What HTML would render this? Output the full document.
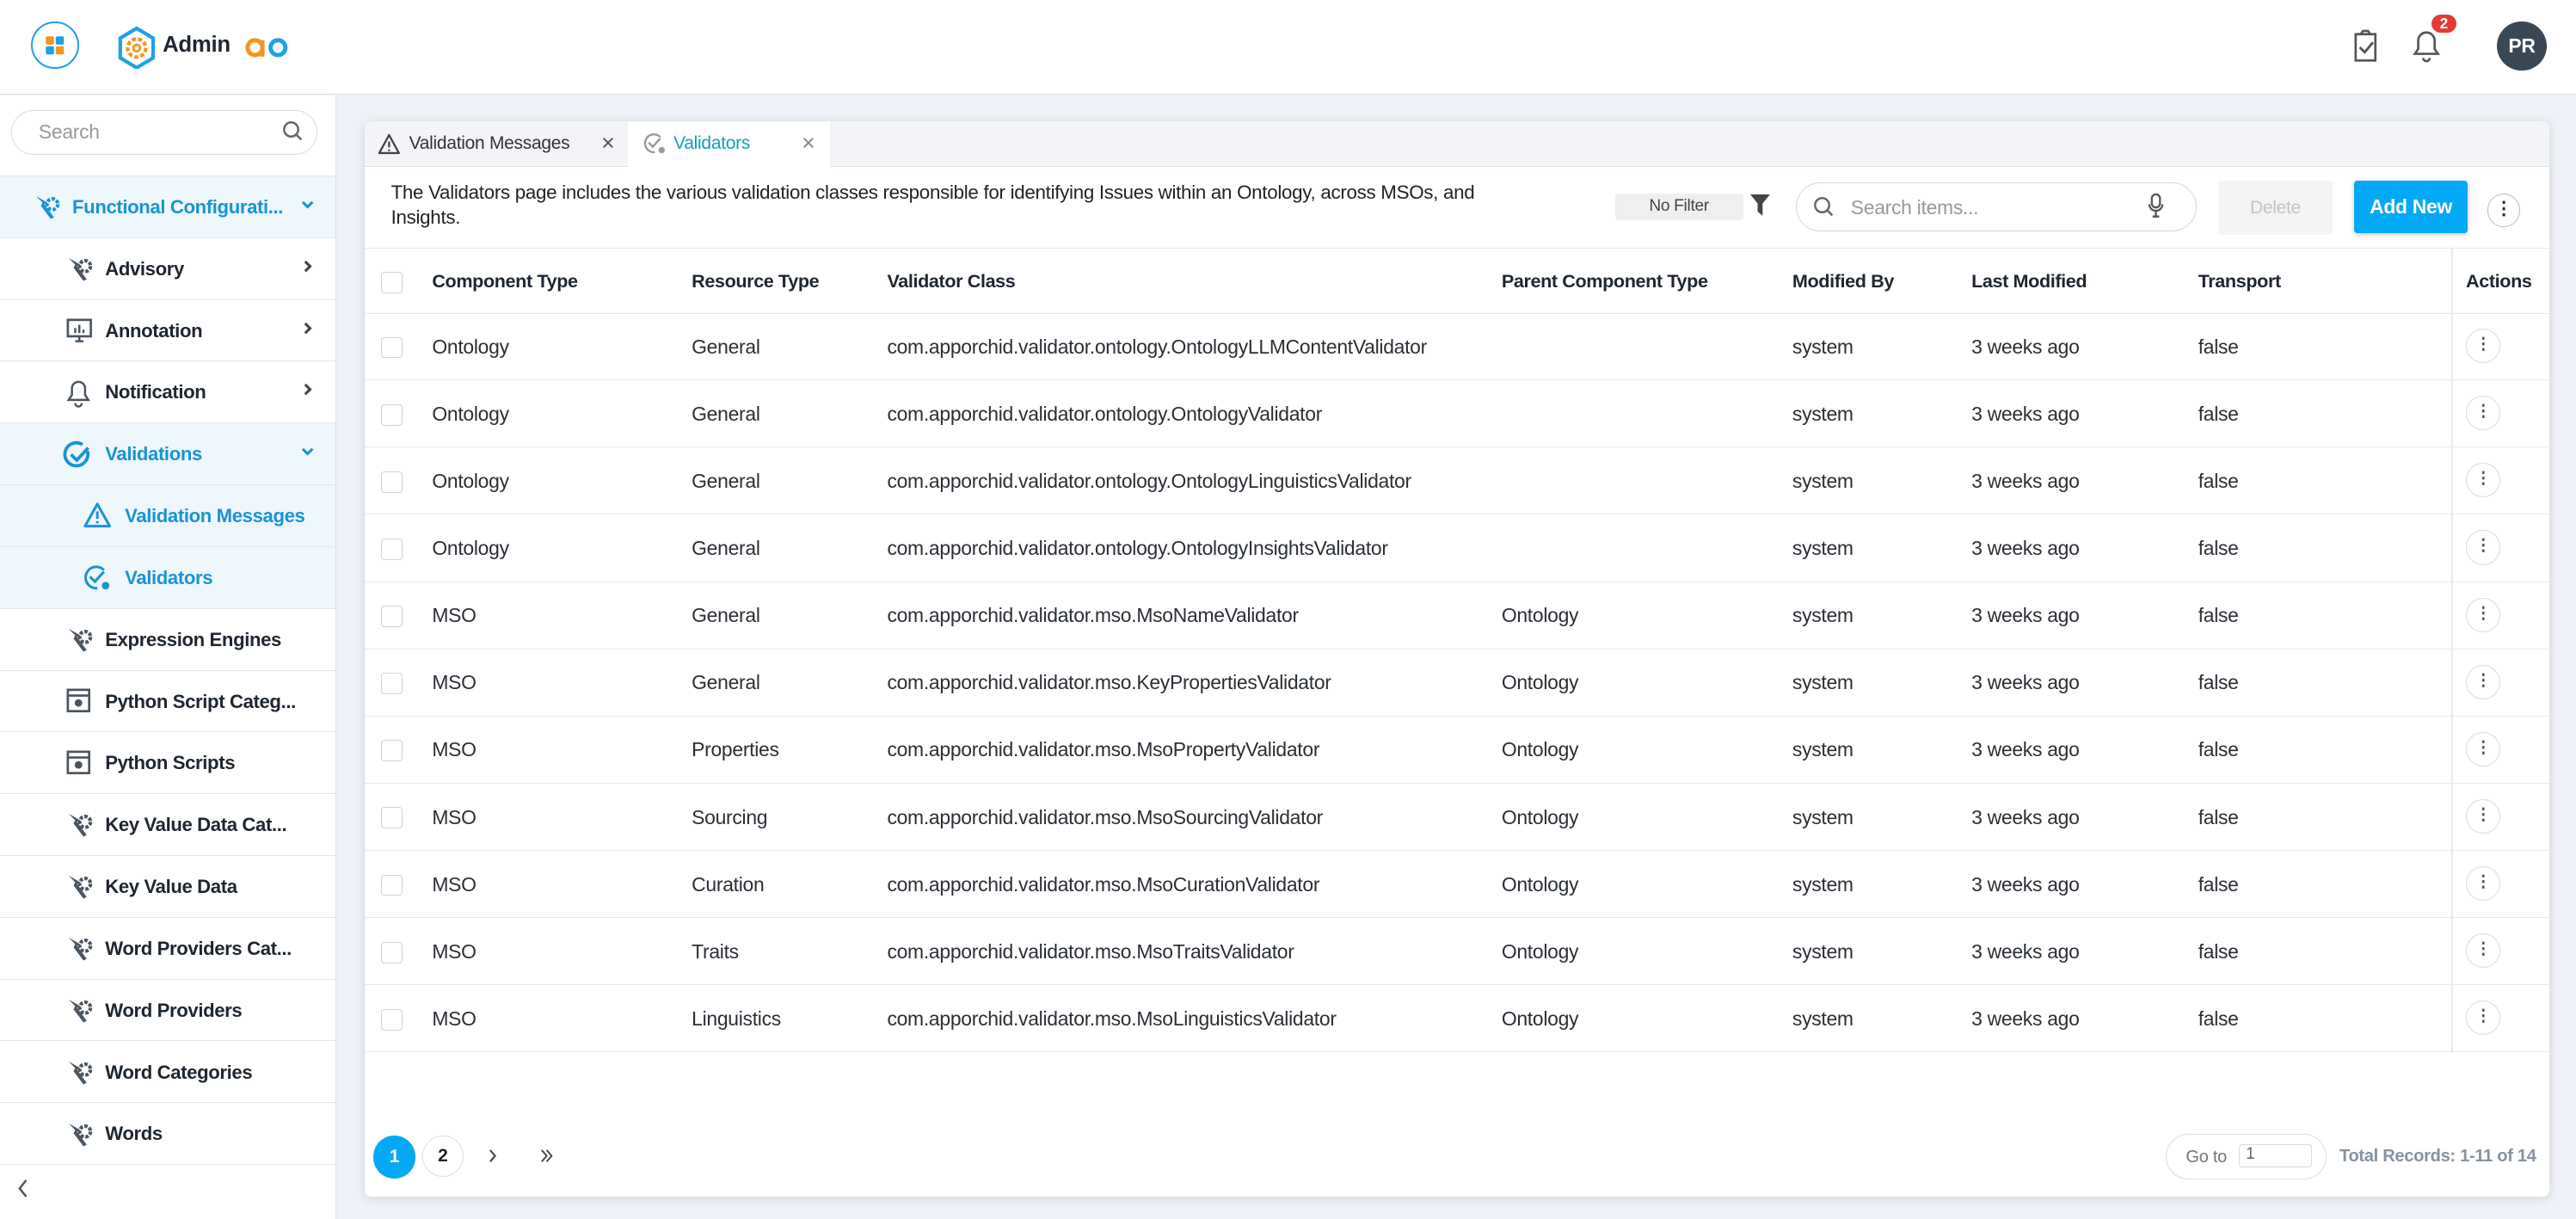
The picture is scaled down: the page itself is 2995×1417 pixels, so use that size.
<!DOCTYPE html>
<html><head><meta charset="utf-8"><style>
html,body{margin:0;padding:0;}
body{width:2995px;height:1417px;overflow:hidden;background:#eef1f7;}
#w{zoom:1.9101;width:1568px;height:742px;position:relative;font-family:"Liberation Sans",sans-serif;color:#222;font-size:12px;letter-spacing:-0.15px;}
.abs{position:absolute;}
#hdr{left:0;top:0;width:1568px;height:57px;background:#fff;border-bottom:1px solid #dde1e6;}
#side{left:0;top:58px;width:204px;height:684px;background:#fff;border-right:1px solid #dde1e6;}
.mi{position:absolute;left:0;width:204px;height:37px;border-bottom:1px solid #e3e6ea;font-size:11.6px;font-weight:bold;color:#1e2630;letter-spacing:-0.2px;}
.mi .t{position:absolute;top:12px;white-space:nowrap;}
.mi .ch{position:absolute;right:13px;top:13px;}
.mi.s{background:#eef7fc;color:#1a93d4;}
.ico{position:absolute;top:10px;}
#card{left:222px;top:74px;width:1330px;height:654px;background:#fff;border-radius:4px;box-shadow:0 1px 6px rgba(0,0,0,.12);overflow:hidden;}
.row{position:absolute;left:0;width:1330px;height:40px;border-bottom:1px solid #e6e8eb;}
.c{position:absolute;top:13px;font-size:12px;color:#2a2f36;white-space:nowrap;}
.h .c{font-weight:bold;color:#1e2630;top:13px;font-size:11.3px;letter-spacing:-0.2px;}
.cb{position:absolute;left:10px;top:14px;width:12px;height:12px;border:1px solid #cfd3d8;border-radius:2px;}
.ab{position:absolute;left:1279px;top:9px;width:20px;height:20px;border:1px solid #d8dbe0;border-radius:50%;text-align:center;line-height:19px;font-size:10px;font-weight:bold;color:#555;}
</style></head><body><div id="w">
<div id="hdr" class="abs">
 <div class="abs" style="left:19px;top:13px;width:29px;height:29px;border:1.3px solid #1ea1e6;border-radius:50%;box-sizing:border-box;">
  <svg width="27" height="27" viewBox="0 0 27 27" style="position:absolute;left:0;top:0"><rect x="8" y="8" width="5" height="5" rx="1" fill="#f7941d"/><rect x="14" y="8" width="5" height="5" rx="1" fill="#1ea1e6"/><rect x="8" y="14" width="5" height="5" rx="1" fill="#1ea1e6"/><rect x="14" y="14" width="5" height="5" rx="1" fill="#f7941d"/></svg></div>
 <svg class="abs" style="left:71px;top:16px" width="24" height="26" viewBox="0 0 24 26"><path d="M12 1 L22 7 L22 19 L12 25 L2 19 L2 7Z" fill="none" stroke="#1ea1e6" stroke-width="2.2"/><circle cx="12" cy="13" r="5.5" fill="none" stroke="#f7941d" stroke-width="2.2" stroke-dasharray="2.5 1.3"/><circle cx="12" cy="13" r="2" fill="none" stroke="#f7941d" stroke-width="1.5"/></svg>
 <div class="abs" style="left:99px;top:20px;font-size:13.5px;font-weight:bold;color:#1e2630;">Admin</div>
 <svg class="abs" style="left:149px;top:22px" width="28" height="14" viewBox="0 0 28 14"><circle cx="6" cy="7" r="4.5" fill="none" stroke="#f7941d" stroke-width="2.6"/><path d="M10.5 2.5v10" stroke="#f7941d" stroke-width="2.6"/><circle cx="20" cy="7" r="4.5" fill="none" stroke="#1ea1e6" stroke-width="2.6"/></svg>
 <svg class="abs" style="left:1432px;top:18px" width="16" height="20" viewBox="0 0 16 20"><path d="M5 3H2v16h12V3h-3M5 3l1.5-2h3L11 3z" fill="none" stroke="#555" stroke-width="1.4"/><path d="M4.5 11l3 3 5-6" fill="none" stroke="#555" stroke-width="1.5"/></svg>
 <svg class="abs" style="left:1467px;top:17px" width="20" height="22" viewBox="0 0 20 22"><path d="M3 16h14l-2-3V8a5 5 0 0 0-10 0v5z M8 18.5a2 2 0 0 0 4 0" fill="none" stroke="#555" stroke-width="1.4"/></svg>
 <div class="abs" style="left:1480px;top:9px;width:15px;height:11px;border-radius:6px;background:#e53935;color:#fff;font-size:9px;font-weight:bold;text-align:center;line-height:11px;">2</div>
 <div class="abs" style="left:1520px;top:13px;width:30px;height:30px;border-radius:50%;background:#3a4755;color:#fff;font-weight:bold;font-size:12px;text-align:center;line-height:30px;">PR</div>
</div>
<div id="side" class="abs">
 <div class="abs" style="left:7px;top:9px;width:186px;height:27px;border:1px solid #d8dbe0;border-radius:14px;box-sizing:border-box;"><span class="abs" style="left:16px;top:6px;color:#999;font-size:12px;">Search</span>
 <svg class="abs" style="left:164px;top:6px" width="13" height="13" viewBox="0 0 13 13"><circle cx="5.5" cy="5.5" r="4.3" fill="none" stroke="#666" stroke-width="1.3"/><path d="M8.7 8.7l3 3" stroke="#666" stroke-width="1.3"/></svg></div>
</div>
<div class="abs" style="left:0;top:58px;width:204px;">
 <div class="mi s" style="top:49px;height:37px;border-top:1px solid #e3e6ea"><span class="ico" style="left:20px">
 <svg width="18" height="18" viewBox="0 0 18 18"><path d="M2 2l4 4-1 2 6 8 2-1-6-8 2-1" fill="#1a93d4"/><circle cx="12" cy="7" r="3.3" fill="none" stroke="#1a93d4" stroke-width="2.2" stroke-dasharray="2 1"/></svg></span><span class="t" style="left:44px">Functional Configurati...</span><svg class="ch" width="8" height="8" viewBox="0 0 8 8"><path d="M1 2.5l3 3 3-3" fill="none" stroke="#1a93d4" stroke-width="1.6"/></svg></div>
</div>
<div class="abs" style="left:0;top:145px;width:204px;">
 <div class="mi" style="top:0"><span class="ico" style="left:40px"><svg width="18" height="18" viewBox="0 0 18 18"><path d="M2 2l4 4-1 2 6 8 2-1-6-8 2-1" fill="#4a5560"/><circle cx="12" cy="7" r="3.3" fill="none" stroke="#4a5560" stroke-width="2.2" stroke-dasharray="2 1"/></svg></span><span class="t" style="left:64px">Advisory</span><svg class="ch" width="8" height="8" viewBox="0 0 8 8"><path d="M2.5 1l3 3-3 3" fill="none" stroke="#444" stroke-width="1.6"/></svg></div>
 <div class="mi" style="top:37.6px"><span class="ico" style="left:40px"><svg width="17" height="17" viewBox="0 0 17 17"><rect x="1.5" y="2" width="14" height="10" fill="none" stroke="#4a5560" stroke-width="1.4"/><path d="M6 15h5M8.5 12v3M6 10V7M8.5 10V5M11 10V8" stroke="#4a5560" stroke-width="1.3"/></svg></span><span class="t" style="left:64px">Annotation</span><svg class="ch" width="8" height="8" viewBox="0 0 8 8"><path d="M2.5 1l3 3-3 3" fill="none" stroke="#444" stroke-width="1.6"/></svg></div>
 <div class="mi" style="top:75.2px"><span class="ico" style="left:40px"><svg width="16" height="18" viewBox="0 0 16 18"><path d="M2 13h12l-2-3V6a4 4 0 0 0-8 0v4z M6 15a2 2 0 0 0 4 0" fill="none" stroke="#4a5560" stroke-width="1.3"/></svg></span><span class="t" style="left:64px">Notification</span><svg class="ch" width="8" height="8" viewBox="0 0 8 8"><path d="M2.5 1l3 3-3 3" fill="none" stroke="#444" stroke-width="1.6"/></svg></div>
 <div class="mi s" style="top:112.8px"><span class="ico" style="left:38px"><svg width="18" height="18" viewBox="0 0 18 18"><path d="M15 6.5A7 7 0 1 1 12 2.5" fill="none" stroke="#1a93d4" stroke-width="2"/><path d="M5 8.5l3.5 3.5 7-7.5" fill="none" stroke="#1a93d4" stroke-width="2"/></svg></span><span class="t" style="left:64px">Validations</span><svg class="ch" width="8" height="8" viewBox="0 0 8 8"><path d="M1 2.5l3 3 3-3" fill="none" stroke="#1a93d4" stroke-width="1.6"/></svg></div>
 <div class="mi s" style="top:150.4px"><span class="ico" style="left:50px"><svg width="18" height="17" viewBox="0 0 18 17"><path d="M9 1.5L16.5 15H1.5Z" fill="none" stroke="#1a93d4" stroke-width="1.6" stroke-linejoin="round"/><path d="M9 6v4.5M9 12v1.2" stroke="#1a93d4" stroke-width="1.6"/></svg></span><span class="t" style="left:76px">Validation Messages</span></div>
 <div class="mi s" style="top:188px"><span class="ico" style="left:50px"><svg width="18" height="18" viewBox="0 0 18 18"><path d="M13 4A6.5 6.5 0 1 0 9 15" fill="none" stroke="#1a93d4" stroke-width="1.6"/><path d="M4.5 8l3 3 5.5-6" fill="none" stroke="#1a93d4" stroke-width="1.6"/><circle cx="14" cy="13.5" r="2.3" fill="#1a93d4"/></svg></span><span class="t" style="left:76px">Validators</span></div>
 <div class="mi" style="top:225.6px"><span class="ico" style="left:40px"><svg width="18" height="18" viewBox="0 0 18 18"><path d="M2 2l4 4-1 2 6 8 2-1-6-8 2-1" fill="#4a5560"/><circle cx="12" cy="7" r="3.3" fill="none" stroke="#4a5560" stroke-width="2.2" stroke-dasharray="2 1"/></svg></span><span class="t" style="left:64px">Expression Engines</span></div>
 <div class="mi" style="top:263.2px"><span class="ico" style="left:40px"><svg width="16" height="16" viewBox="0 0 16 16"><rect x="1.5" y="1.5" width="13" height="13" fill="none" stroke="#4a5560" stroke-width="1.4"/><path d="M1.5 5h13" stroke="#4a5560" stroke-width="1.4"/><circle cx="8" cy="9.5" r="2.3" fill="#4a5560"/></svg></span><span class="t" style="left:64px">Python Script Categ...</span></div>
 <div class="mi" style="top:300.8px"><span class="ico" style="left:40px"><svg width="16" height="16" viewBox="0 0 16 16"><rect x="1.5" y="1.5" width="13" height="13" fill="none" stroke="#4a5560" stroke-width="1.4"/><path d="M1.5 5h13" stroke="#4a5560" stroke-width="1.4"/><circle cx="8" cy="9.5" r="2.3" fill="#4a5560"/></svg></span><span class="t" style="left:64px">Python Scripts</span></div>
 <div class="mi" style="top:338.4px"><span class="ico" style="left:40px"><svg width="18" height="18" viewBox="0 0 18 18"><path d="M2 2l4 4-1 2 6 8 2-1-6-8 2-1" fill="#4a5560"/><circle cx="12" cy="7" r="3.3" fill="none" stroke="#4a5560" stroke-width="2.2" stroke-dasharray="2 1"/></svg></span><span class="t" style="left:64px">Key Value Data Cat...</span></div>
 <div class="mi" style="top:376px"><span class="ico" style="left:40px"><svg width="18" height="18" viewBox="0 0 18 18"><path d="M2 2l4 4-1 2 6 8 2-1-6-8 2-1" fill="#4a5560"/><circle cx="12" cy="7" r="3.3" fill="none" stroke="#4a5560" stroke-width="2.2" stroke-dasharray="2 1"/></svg></span><span class="t" style="left:64px">Key Value Data</span></div>
 <div class="mi" style="top:413.6px"><span class="ico" style="left:40px"><svg width="18" height="18" viewBox="0 0 18 18"><path d="M2 2l4 4-1 2 6 8 2-1-6-8 2-1" fill="#4a5560"/><circle cx="12" cy="7" r="3.3" fill="none" stroke="#4a5560" stroke-width="2.2" stroke-dasharray="2 1"/></svg></span><span class="t" style="left:64px">Word Providers Cat...</span></div>
 <div class="mi" style="top:451.2px"><span class="ico" style="left:40px"><svg width="18" height="18" viewBox="0 0 18 18"><path d="M2 2l4 4-1 2 6 8 2-1-6-8 2-1" fill="#4a5560"/><circle cx="12" cy="7" r="3.3" fill="none" stroke="#4a5560" stroke-width="2.2" stroke-dasharray="2 1"/></svg></span><span class="t" style="left:64px">Word Providers</span></div>
 <div class="mi" style="top:488.8px"><span class="ico" style="left:40px"><svg width="18" height="18" viewBox="0 0 18 18"><path d="M2 2l4 4-1 2 6 8 2-1-6-8 2-1" fill="#4a5560"/><circle cx="12" cy="7" r="3.3" fill="none" stroke="#4a5560" stroke-width="2.2" stroke-dasharray="2 1"/></svg></span><span class="t" style="left:64px">Word Categories</span></div>
 <div class="mi" style="top:526.4px"><span class="ico" style="left:40px"><svg width="18" height="18" viewBox="0 0 18 18"><path d="M2 2l4 4-1 2 6 8 2-1-6-8 2-1" fill="#4a5560"/><circle cx="12" cy="7" r="3.3" fill="none" stroke="#4a5560" stroke-width="2.2" stroke-dasharray="2 1"/></svg></span><span class="t" style="left:64px">Words</span></div>
 <svg class="abs" style="left:10px;top:572px" width="8" height="12" viewBox="0 0 8 12"><path d="M6 1L2 6l4 5" fill="none" stroke="#555" stroke-width="1.3"/></svg>
</div>

<div id="card" class="abs">
 <div class="abs" style="left:0;top:0;width:1330px;height:27px;background:#f2f4f7;border-bottom:1px solid #dde1e6;"></div>
 <div class="abs" style="left:0;top:0;width:160px;height:27px;">
  <svg class="abs" style="left:8px;top:7px" width="14" height="13" viewBox="0 0 14 13"><path d="M7 1L13 12H1Z" fill="none" stroke="#444" stroke-width="1.2" stroke-linejoin="round"/><path d="M7 5v3.5M7 9.8v1" stroke="#444" stroke-width="1.2"/></svg>
  <span class="abs" style="left:27px;top:7px;font-size:11px;color:#333;">Validation Messages</span>
  <span class="abs" style="left:144px;top:5px;font-size:14px;color:#555;">&#215;</span></div>
 <div class="abs" style="left:160px;top:0;width:123px;height:28px;background:#fff;">
  <svg class="abs" style="left:9px;top:6px" width="15" height="15" viewBox="0 0 18 18"><path d="M13 4A6.5 6.5 0 1 0 9 15" fill="none" stroke="#999" stroke-width="1.5"/><path d="M4.5 8l3 3 5.5-6" fill="none" stroke="#999" stroke-width="1.5"/><circle cx="14" cy="13.5" r="2.3" fill="#999"/></svg>
  <span class="abs" style="left:28px;top:7px;font-size:11px;color:#12a0b8;">Validators</span>
  <span class="abs" style="left:106px;top:5px;font-size:14px;color:#888;">&#215;</span></div>
 <div class="abs" style="left:16px;top:36px;width:690px;font-size:11.7px;line-height:15px;color:#222;">The Validators page includes the various validation classes responsible for identifying Issues within an Ontology, across MSOs, and Insights.</div>
 <div class="abs" style="left:761px;top:44px;width:78px;height:16px;background:#efefef;border-radius:2px;font-size:10px;color:#444;text-align:center;line-height:16px;">No Filter</div>
 <svg class="abs" style="left:843px;top:44px" width="13" height="14" viewBox="0 0 13 14"><path d="M0.5 0.5h12L8 6v7.5L5 11V6z" fill="#444"/></svg>
 <div class="abs" style="left:871px;top:37px;width:244px;height:30px;border:1px solid #d3d6db;border-radius:15px;box-sizing:border-box;">
  <svg class="abs" style="left:10px;top:8px" width="13" height="13" viewBox="0 0 13 13"><circle cx="5.5" cy="5.5" r="4.3" fill="none" stroke="#666" stroke-width="1.3"/><path d="M8.7 8.7l3 3" stroke="#666" stroke-width="1.3"/></svg>
  <span class="abs" style="left:33px;top:8px;color:#999;font-size:12px;">Search items...</span>
  <svg class="abs" style="left:214px;top:6px" width="10" height="16" viewBox="0 0 10 16"><rect x="2.5" y="1" width="5" height="8" rx="2.5" fill="none" stroke="#555" stroke-width="1.2"/><path d="M1 7a4 4 0 0 0 8 0M5 11v3M3 14.5h4" fill="none" stroke="#555" stroke-width="1.2"/></svg></div>
 <div class="abs" style="left:1128px;top:36px;width:70px;height:33px;background:#f4f4f4;border-radius:2px;color:#c4c4c4;font-size:11px;text-align:center;line-height:33px;">Delete</div>
 <div class="abs" style="left:1211px;top:36px;width:69px;height:32px;background:#03a9f4;border-radius:2px;color:#fff;font-size:12px;font-weight:bold;text-align:center;line-height:32px;box-shadow:0 1px 3px rgba(0,0,0,.2);">Add New</div>
 <div class="abs" style="left:1292px;top:44px;width:19px;height:19px;border:1px solid #bbb;border-radius:50%;text-align:center;line-height:18px;font-weight:bold;font-size:11px;">&#8942;</div>

 <div class="row h" style="top:77px;height:39px;border-top:1px solid #e6e8eb;">
  <div class="cb"></div><span class="c" style="left:41px">Component Type</span><span class="c" style="left:199px">Resource Type</span><span class="c" style="left:318px">Validator Class</span><span class="c" style="left:692px">Parent Component Type</span><span class="c" style="left:869px">Modified By</span><span class="c" style="left:978px">Last Modified</span><span class="c" style="left:1116px">Transport</span><span class="c" style="left:1279px">Actions</span></div>
 <div class="abs" style="left:1270px;top:77px;width:1px;height:490px;background:#e6e8eb;"></div>

 <div class="abs" style="left:5px;top:617px;width:26px;height:26px;border-radius:50%;background:#03a9f4;color:#fff;font-weight:bold;font-size:11px;text-align:center;line-height:26px;">1</div>
 <div class="abs" style="left:35px;top:617px;width:24px;height:24px;border:1px solid #ddd;border-radius:50%;color:#222;font-weight:bold;font-size:11px;text-align:center;line-height:24px;">2</div>
 <svg class="abs" style="left:75px;top:625px" width="6" height="9" viewBox="0 0 6 9"><path d="M1.5 1l3 3.5-3 3.5" fill="none" stroke="#444" stroke-width="1.1"/></svg>
 <svg class="abs" style="left:106px;top:625px" width="9" height="9" viewBox="0 0 9 9"><path d="M1.5 1l3 3.5-3 3.5M4.5 1l3 3.5-3 3.5" fill="none" stroke="#444" stroke-width="1"/></svg>
 <div class="abs" style="left:1096px;top:616px;width:98px;height:28px;border:1px solid #ddd;border-radius:14px;box-sizing:border-box;">
  <span class="abs" style="left:12px;top:8px;font-size:10.5px;color:#777;">Go to</span>
  <div class="abs" style="left:44px;top:6px;width:45px;height:14px;border:1px solid #ddd;border-radius:2px;font-size:10px;color:#666;padding-left:4px;box-sizing:border-box;line-height:12px;">1</div></div>
 <div class="abs" style="left:1202px;top:624px;font-size:10.5px;font-weight:bold;color:#8592a0;">Total Records: 1-11 of 14</div>
</div>
<div class="abs" style="left:222px;top:191px;width:1330px;">
 <div class="row" style="top:0"><div class="cb"></div><span class="c" style="left:41px">Ontology</span><span class="c" style="left:199px">General</span><span class="c" style="left:318px">com.apporchid.validator.ontology.OntologyLLMContentValidator</span><span class="c" style="left:869px">system</span><span class="c" style="left:978px">3 weeks ago</span><span class="c" style="left:1116px">false</span><div class="ab">&#8942;</div></div>
 <div class="row" style="top:40.9px"><div class="cb"></div><span class="c" style="left:41px">Ontology</span><span class="c" style="left:199px">General</span><span class="c" style="left:318px">com.apporchid.validator.ontology.OntologyValidator</span><span class="c" style="left:869px">system</span><span class="c" style="left:978px">3 weeks ago</span><span class="c" style="left:1116px">false</span><div class="ab">&#8942;</div></div>
 <div class="row" style="top:81.8px"><div class="cb"></div><span class="c" style="left:41px">Ontology</span><span class="c" style="left:199px">General</span><span class="c" style="left:318px">com.apporchid.validator.ontology.OntologyLinguisticsValidator</span><span class="c" style="left:869px">system</span><span class="c" style="left:978px">3 weeks ago</span><span class="c" style="left:1116px">false</span><div class="ab">&#8942;</div></div>
 <div class="row" style="top:122.7px"><div class="cb"></div><span class="c" style="left:41px">Ontology</span><span class="c" style="left:199px">General</span><span class="c" style="left:318px">com.apporchid.validator.ontology.OntologyInsightsValidator</span><span class="c" style="left:869px">system</span><span class="c" style="left:978px">3 weeks ago</span><span class="c" style="left:1116px">false</span><div class="ab">&#8942;</div></div>
 <div class="row" style="top:163.6px"><div class="cb"></div><span class="c" style="left:41px">MSO</span><span class="c" style="left:199px">General</span><span class="c" style="left:318px">com.apporchid.validator.mso.MsoNameValidator</span><span class="c" style="left:692px">Ontology</span><span class="c" style="left:869px">system</span><span class="c" style="left:978px">3 weeks ago</span><span class="c" style="left:1116px">false</span><div class="ab">&#8942;</div></div>
 <div class="row" style="top:204.5px"><div class="cb"></div><span class="c" style="left:41px">MSO</span><span class="c" style="left:199px">General</span><span class="c" style="left:318px">com.apporchid.validator.mso.KeyPropertiesValidator</span><span class="c" style="left:692px">Ontology</span><span class="c" style="left:869px">system</span><span class="c" style="left:978px">3 weeks ago</span><span class="c" style="left:1116px">false</span><div class="ab">&#8942;</div></div>
 <div class="row" style="top:245.4px"><div class="cb"></div><span class="c" style="left:41px">MSO</span><span class="c" style="left:199px">Properties</span><span class="c" style="left:318px">com.apporchid.validator.mso.MsoPropertyValidator</span><span class="c" style="left:692px">Ontology</span><span class="c" style="left:869px">system</span><span class="c" style="left:978px">3 weeks ago</span><span class="c" style="left:1116px">false</span><div class="ab">&#8942;</div></div>
 <div class="row" style="top:286.3px"><div class="cb"></div><span class="c" style="left:41px">MSO</span><span class="c" style="left:199px">Sourcing</span><span class="c" style="left:318px">com.apporchid.validator.mso.MsoSourcingValidator</span><span class="c" style="left:692px">Ontology</span><span class="c" style="left:869px">system</span><span class="c" style="left:978px">3 weeks ago</span><span class="c" style="left:1116px">false</span><div class="ab">&#8942;</div></div>
 <div class="row" style="top:327.2px"><div class="cb"></div><span class="c" style="left:41px">MSO</span><span class="c" style="left:199px">Curation</span><span class="c" style="left:318px">com.apporchid.validator.mso.MsoCurationValidator</span><span class="c" style="left:692px">Ontology</span><span class="c" style="left:869px">system</span><span class="c" style="left:978px">3 weeks ago</span><span class="c" style="left:1116px">false</span><div class="ab">&#8942;</div></div>
 <div class="row" style="top:368.1px"><div class="cb"></div><span class="c" style="left:41px">MSO</span><span class="c" style="left:199px">Traits</span><span class="c" style="left:318px">com.apporchid.validator.mso.MsoTraitsValidator</span><span class="c" style="left:692px">Ontology</span><span class="c" style="left:869px">system</span><span class="c" style="left:978px">3 weeks ago</span><span class="c" style="left:1116px">false</span><div class="ab">&#8942;</div></div>
 <div class="row" style="top:409px"><div class="cb"></div><span class="c" style="left:41px">MSO</span><span class="c" style="left:199px">Linguistics</span><span class="c" style="left:318px">com.apporchid.validator.mso.MsoLinguisticsValidator</span><span class="c" style="left:692px">Ontology</span><span class="c" style="left:869px">system</span><span class="c" style="left:978px">3 weeks ago</span><span class="c" style="left:1116px">false</span><div class="ab">&#8942;</div></div>
</div>
</div></body></html>
